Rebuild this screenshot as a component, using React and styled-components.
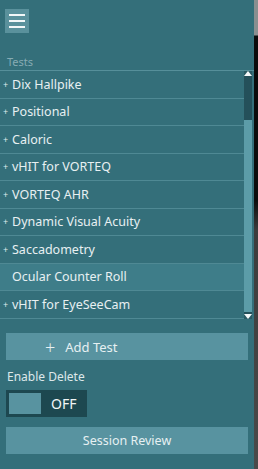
import React from "react";
import styled, { createGlobalStyle } from "styled-components";

const Global = createGlobalStyle`
  html, body {
    margin: 0;
    padding: 0;
    background: #2b2b2b;
  }
  body {
    font-family: "Noto Sans", "Open Sans", sans-serif;
  }
`;

const Page = styled.div`
  display: flex;
  width: 258px;
  height: 469px;
  overflow: hidden;
`;

const Panel = styled.div`
  width: 254px;
  height: 469px;
  background-color: #346f7a;
  display: flex;
  flex-direction: column;
`;

const Edge = styled.div`
  width: 4px;
  height: 469px;
  background: linear-gradient(
    to bottom,
    #8a8f90 0px,
    #8a8f90 35px,
    #0c0c0c 36px,
    #0c0c0c 200px,
    #3c3c3c 230px,
    #4a4a4a 469px
  );
`;

const MenuButton = styled.button`
  margin: 9px 0 0 5px;
  width: 24px;
  height: 24px;
  border: none;
  padding: 0;
  background-color: #5a919c;
  display: flex;
  flex-direction: column;
  align-items: center;
  justify-content: center;
  gap: 4px;
`;

const Bar = styled.span`
  display: block;
  width: 16px;
  height: 2px;
  background: #f2f7f8;
`;

const Label = styled.div`
  margin: 20px 0 0 7px;
  height: 17px;
  font-size: 11px;
  line-height: 17px;
  color: #86abb3;
`;

const ListWrap = styled.div`
  display: flex;
  border-top: 1px solid #568f9a;
`;

const List = styled.div`
  width: 244px;
  display: flex;
  flex-direction: column;
`;

const Row = styled.div`
  height: 27.5px;
  box-sizing: border-box;
  border-bottom: 1px solid #4f8994;
  background-color: ${(p) => (p.$active ? "#3e7d89" : "transparent")};
  display: flex;
  align-items: center;
  color: #e8f0f2;
  font-size: 12.5px;
  white-space: nowrap;
`;

const Plus = styled.span`
  width: 12px;
  padding-left: 3px;
  box-sizing: border-box;
  font-size: 9px;
  color: #dfe9eb;
`;

const Scroll = styled.div`
  width: 8px;
  display: flex;
  flex-direction: column;
  align-items: stretch;
`;

const Arrow = styled.div`
  height: 5px;
  display: flex;
  justify-content: center;
  align-items: center;
  background: #2a5a63;
`;

const Track = styled.div`
  height: ${(p) => p.$h}px;
  background: ${(p) => (p.$thumb ? "#5c9ca8" : "#24505a")};
`;

const Wide = styled.button`
  margin: ${(p) => p.$m};
  width: 242px;
  height: 27px;
  border: none;
  background-color: #5893a0;
  color: #e6f0f2;
  font-family: inherit;
  font-size: ${(p) => p.$fs}px;
  display: flex;
  align-items: center;
  justify-content: ${(p) => (p.$center ? "center" : "flex-start")};
  padding: 0 0 0 ${(p) => (p.$center ? 0 : 39)}px;
`;

const BigPlus = styled.span`
  font-size: 18px;
  margin-right: 10px;
  font-weight: 300;
`;

const Caption = styled.div`
  margin: 9px 0 0 7px;
  font-size: 12px;
  color: #dde8ea;
  line-height: 16px;
`;

const Toggle = styled.div`
  margin: 5px 0 0 6px;
  width: 81px;
  height: 27px;
  background-color: #1d4850;
  display: flex;
  align-items: center;
  padding: 0 3px;
  box-sizing: border-box;
`;

const Knob = styled.span`
  width: 32px;
  height: 21px;
  background-color: #5893a0;
`;

const ToggleText = styled.span`
  margin-left: 10px;
  color: #f2f6f7;
  font-size: 14px;
`;

const tests = [
  { name: "Dix Hallpike", plus: true },
  { name: "Positional", plus: true },
  { name: "Caloric", plus: true },
  { name: "vHIT for VORTEQ", plus: true },
  { name: "VORTEQ AHR", plus: true },
  { name: "Dynamic Visual Acuity", plus: true },
  { name: "Saccadometry", plus: true },
  { name: "Ocular Counter Roll", plus: false, active: true },
  { name: "vHIT for EyeSeeCam", plus: true },
];

const Tri = ({ up }) => (
  <svg width="8" height="5" viewBox="0 0 8 5">
    <path d={up ? "M0 5 L4 0 L8 5 Z" : "M0 0 L4 5 L8 0 Z"} fill="#f4f8f9" />
  </svg>
);

export default function App() {
  return (
    <Page>
      <Global />
      <Panel>
        <MenuButton>
          <Bar />
          <Bar />
          <Bar />
        </MenuButton>
        <Label>Tests</Label>
        <ListWrap>
          <List>
            {tests.map((t) => (
              <Row key={t.name} $active={t.active}>
                <Plus>{t.plus ? "+" : ""}</Plus>
                {t.name}
              </Row>
            ))}
          </List>
          <Scroll>
            <Arrow>
              <Tri up />
            </Arrow>
            <Track $h={44} />
            <Track $h={192} $thumb />
            <Track $h={2} />
            <Arrow>
              <Tri />
            </Arrow>
          </Scroll>
        </ListWrap>
        <Wide $m="14px 0 0 6px" $fs={13}>
          <BigPlus>+</BigPlus>Add Test
        </Wide>
        <Caption>Enable Delete</Caption>
        <Toggle>
          <Knob />
          <ToggleText>OFF</ToggleText>
        </Toggle>
        <Wide $m="10px 0 0 6px" $fs={12.5} $center>
          Session Review
        </Wide>
      </Panel>
      <Edge />
    </Page>
  );
}
